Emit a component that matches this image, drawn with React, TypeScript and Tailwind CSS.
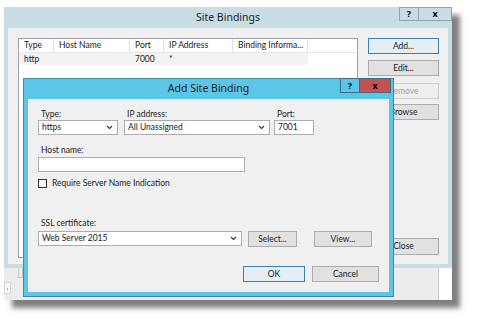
import React from "react";

const font = { fontFamily: 'Lato, "Noto Sans", sans-serif' };
const titleFont = { fontFamily: '"Noto Sans", "Open Sans", sans-serif' };

function Chevron() {
  return (
    <svg width="7" height="5" viewBox="0 0 7 5" className="shrink-0">
      <polyline points="1,1 3.5,3.5 6,1" fill="none" stroke="#333" strokeWidth="1.1" />
    </svg>
  );
}

function WinButton({
  label,
  className,
  primary,
  disabled,
}: {
  label: string;
  className: string;
  primary?: boolean;
  disabled?: boolean;
}) {
  return (
    <div
      className={`flex items-center justify-center h-[16px] text-[8.5px] leading-none border ${
        primary ? "border-[#3c7fb1] bg-[#e5eef5]" : "border-[#adadad] bg-[#e1e1e1]"
      } ${disabled ? "text-[#a0a0a0] bg-[#efefef] border-[#cfcfcf]" : "text-[#1a1a1a]"} ${className}`}
    >
      {label}
    </div>
  );
}

function Select({ value, className }: { value: string; className: string }) {
  return (
    <div
      className={`flex items-center justify-between h-[15px] bg-white border border-[#acacac] pl-[3px] pr-[4px] text-[8.5px] leading-none text-[#1a1a1a] ${className}`}
    >
      <span>{value}</span>
      <Chevron />
    </div>
  );
}

function Label({ text }: { text: string }) {
  return <div className="pl-[3px] h-[11px] text-[8.5px] leading-[11px] text-[#1a1a1a]">{text}</div>;
}

function SiteBindings() {
  const cols = [
    { name: "Type", w: "w-[35px]" },
    { name: "Host Name", w: "w-[76px]" },
    { name: "Port", w: "w-[34px]" },
    { name: "IP Address", w: "w-[69px]" },
    { name: "Binding Informa...", w: "w-[75px]" },
  ];
  return (
    <div className="flex flex-col h-[261px] bg-[#c7dce3]">
      <div className="relative h-[21px] flex items-center justify-center shrink-0" style={titleFont}>
        <span className="text-[10.5px] text-[#1e1e1e]">Site Bindings</span>
        <div className="absolute right-0 top-0 flex h-[14px]">
          <div className="w-[19px] h-full border border-[#8fa5ad] border-r-0 flex items-center justify-center text-[9px] font-bold text-black">
            ?
          </div>
          <div className="w-[34px] h-full border border-[#8fa5ad] flex items-center justify-center text-[9px] font-bold text-black">
            x
          </div>
        </div>
      </div>
      <div className="flex-1 mx-[4px] bg-[#f0f0f0] flex pl-[10px] pt-[10px] pb-[6px]">
        <div className="w-[340px] h-full bg-white border border-[#9da4ad] flex flex-col">
          <div className="flex h-[14px] border-b border-[#e5e5e5] text-[8.5px] leading-none text-[#1a1a1a]">
            {cols.map((c) => (
              <div key={c.name} className={`${c.w} h-full flex items-center pl-[5px] border-r border-[#e0e0e0] whitespace-nowrap`}>
                {c.name}
              </div>
            ))}
          </div>
          <div className="flex h-[12px] w-[289px] bg-[#f3f3f3] text-[8.5px] leading-none text-[#1a1a1a] items-center">
            <span className="w-[35px] pl-[5px]">http</span>
            <span className="w-[76px]" />
            <span className="w-[34px] pl-[5px]">7000</span>
            <span className="pl-[5px]">*</span>
          </div>
        </div>
        <div className="ml-[10px] w-[71px] flex flex-col">
          <WinButton label="Add..." className="h-[16px]" primary />
          <WinButton label="Edit..." className="mt-[6px]" />
          <WinButton label="Remove" className="mt-[7px]" disabled />
          <WinButton label="Browse" className="mt-[5px]" />
          <div className="flex-1" />
          <WinButton label="Close" className="mb-[3px] h-[17px]" />
        </div>
      </div>
      <div className="h-[4px] shrink-0" />
    </div>
  );
}

function AddBinding() {
  return (
    <div className="absolute left-[19px] top-[71px] w-[371px] h-[219px] bg-[#5bc6e7] border border-[#3f8aa6] flex flex-col">
      <div className="relative h-[20px] flex items-center justify-center shrink-0" style={titleFont}>
        <span className="text-[10.5px] text-[#1e1e1e]">Add Site Binding</span>
        <div className="absolute right-[2px] top-[-1px] flex h-[15px]">
          <div className="w-[19px] h-full border border-[#3b6e80] border-r-0 flex items-center justify-center text-[9px] font-bold text-black">
            ?
          </div>
          <div className="w-[32px] h-full border border-[#3b6e80] bg-[#c75050] flex items-center justify-center text-[9px] font-bold text-black">
            x
          </div>
        </div>
      </div>
      <div className="flex-1 mx-[4px] mb-[4px] bg-[#f0f0f0] flex flex-col pl-[10px] pr-[10px] pt-[10px]">
        <div className="flex">
          <div className="w-[80px] flex flex-col">
            <Label text="Type:" />
            <Select value="https" className="w-[80px]" />
          </div>
          <div className="ml-[6px] w-[146px] flex flex-col">
            <Label text="IP address:" />
            <Select value="All Unassigned" className="w-[146px]" />
          </div>
          <div className="ml-[4px] w-[40px] flex flex-col">
            <Label text="Port:" />
            <div className="h-[15px] bg-white border border-[#acacac] pl-[3px] text-[8.5px] leading-[13px] text-[#1a1a1a]">7001</div>
          </div>
        </div>
        <div className="mt-[10px]">
          <Label text="Host name:" />
        </div>
        <div className="mt-[1px] w-[207px] h-[15px] bg-white border border-[#acacac]" />
        <div className="mt-[7px] flex items-center">
          <div className="w-[9px] h-[9px] bg-white border border-[#333]" />
          <span className="ml-[5px] text-[8.5px] leading-none text-[#1a1a1a]">Require Server Name Indication</span>
        </div>
        <div className="mt-[30px]">
          <Label text="SSL certificate:" />
        </div>
        <div className="mt-[2px] flex">
          <Select value="Web Server 2015" className="w-[204px]" />
          <WinButton label="Select..." className="ml-[6px] w-[49px]" />
          <WinButton label="View..." className="ml-[17px] w-[58px]" />
        </div>
        <div className="mt-[19px] flex justify-end">
          <WinButton label="OK" className="w-[62px]" primary />
          <WinButton label="Cancel" className="ml-[7px] w-[67px]" />
        </div>
      </div>
    </div>
  );
}

export default function App() {
  return (
    <div className="w-[483px] h-[323px] bg-white overflow-hidden" style={font}>
      <div className="relative ml-[4px] mt-[7px] w-[448px] h-[293px] shadow-[8px_8px_5px_rgba(0,0,0,0.5)] bg-[#ececec] flex flex-col">
        <SiteBindings />
        <div className="flex-1 flex">
          <div className="w-[14px] flex flex-col">
            <div className="h-[14px]" />
            <div className="w-[7px] h-[12px] bg-white border border-[#cfcfcf] flex items-center justify-center text-[8px] leading-none text-[#555]">
              ›
            </div>
          </div>
          <div className="w-[5px] h-[10px] border border-[#c9c9c9] border-t-0" />
          <div className="flex-1" />
          <div className="w-[14px] bg-white border-l border-[#c9c9c9]" />
        </div>
        <AddBinding />
      </div>
    </div>
  );
}
